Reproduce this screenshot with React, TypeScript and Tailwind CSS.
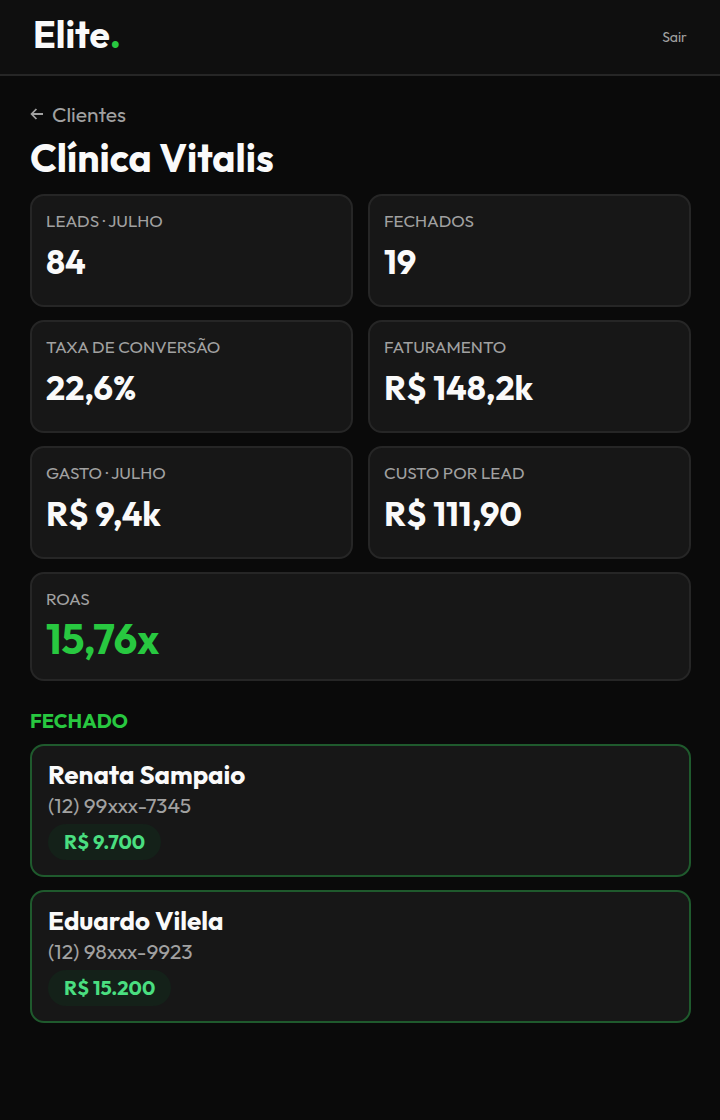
import clsx from 'clsx'

const metrics = [
  { label: 'LEADS · JULHO', value: '84' },
  { label: 'FECHADOS', value: '19' },
  { label: 'TAXA DE CONVERSÃO', value: '22,6%' },
  { label: 'FATURAMENTO', value: 'R$ 148,2k' },
  { label: 'GASTO · JULHO', value: 'R$ 9,4k' },
  { label: 'CUSTO POR LEAD', value: 'R$ 111,90' },
  { label: 'ROAS', value: '15,76x', highlight: true },
]

const closed = [
  { name: 'Renata Sampaio', phone: '(12) 99xxx-7345', amount: 'R$ 9.700' },
  { name: 'Eduardo Vilela', phone: '(12) 98xxx-9923', amount: 'R$ 15.200' },
]

function BackArrow() {
  return (
    <svg viewBox="0 0 14 14" className="size-3.5" fill="none" stroke="currentColor" strokeWidth="1.8" aria-hidden="true">
      <path d="M13 7H1.8M6.4 2L1.6 7l4.8 5" />
    </svg>
  )
}

function Header() {
  return (
    <header className="flex items-center justify-between border-b-2 border-[#262626] bg-[#0f0f0f] px-[33px] py-3.5">
      <span className="pb-1 text-[37px] leading-[42px] font-bold text-[#fafafa]">
        Elite<span className="text-[#28c840]">.</span>
      </span>
      <button className="text-sm text-[#a1a1a1]">Sair</button>
    </header>
  )
}

function MetricCard({ label, value, highlight }: { label: string; value: string; highlight?: boolean }) {
  return (
    <div
      className={clsx(
        'rounded-[14px] border-2 border-[#262626] bg-[#171717] px-3.5 pt-3',
        highlight ? 'col-span-2 pb-[19px]' : 'pb-[21px]',
      )}
    >
      <dt className="text-[17px] leading-[26px] text-[#a1a1a1]">{label}</dt>
      <dd
        className={clsx(
          'mt-1.5 font-bold',
          highlight ? 'text-[41px] leading-[42px] text-[#28c840]' : 'text-[34px] leading-[44px] text-[#fafafa]',
        )}
      >
        {value}
      </dd>
    </div>
  )
}

function ClientCard({ name, phone, amount }: { name: string; phone: string; amount: string }) {
  return (
    <li className="rounded-[14px] border-2 border-[#1f5a2d] bg-[#171717] px-4 pt-3.5 pb-[15px]">
      <h3 className="text-[26px] leading-[30px] font-bold text-[#fafafa]">{name}</h3>
      <p className="text-[21px] leading-[30px] text-[#a1a1a1]">{phone}</p>
      <span className="mt-1 block w-fit rounded-full bg-[#142119] px-4 text-[20px] leading-[36px] font-bold text-[#4ade80]">
        {amount}
      </span>
    </li>
  )
}

export default function App() {
  return (
    <div className="min-h-screen bg-[#0a0a0a] font-['Outfit','Lato',sans-serif]">
      <Header />
      <main className="pt-6 pr-[29px] pb-8 pl-[30px]">
        <a href="#clientes" className="flex w-fit items-center gap-2 text-[21px] leading-7 text-[#a1a1a1]">
          <BackArrow />
          Clientes
        </a>
        <h1 className="mt-1.5 text-[39px] leading-[48px] font-bold text-[#fafafa]">Clínica Vitalis</h1>
        <dl className="mt-3 grid grid-cols-2 gap-x-[15px] gap-y-[13px]">
          {metrics.map((metric) => (
            <MetricCard key={metric.label} {...metric} />
          ))}
        </dl>
        <h2 className="mt-[26px] text-[20px] leading-7 font-bold text-[#28c840]">FECHADO</h2>
        <ul className="mt-[9px] flex flex-col gap-[13px]">
          {closed.map((client) => (
            <ClientCard key={client.name} {...client} />
          ))}
        </ul>
      </main>
    </div>
  )
}
